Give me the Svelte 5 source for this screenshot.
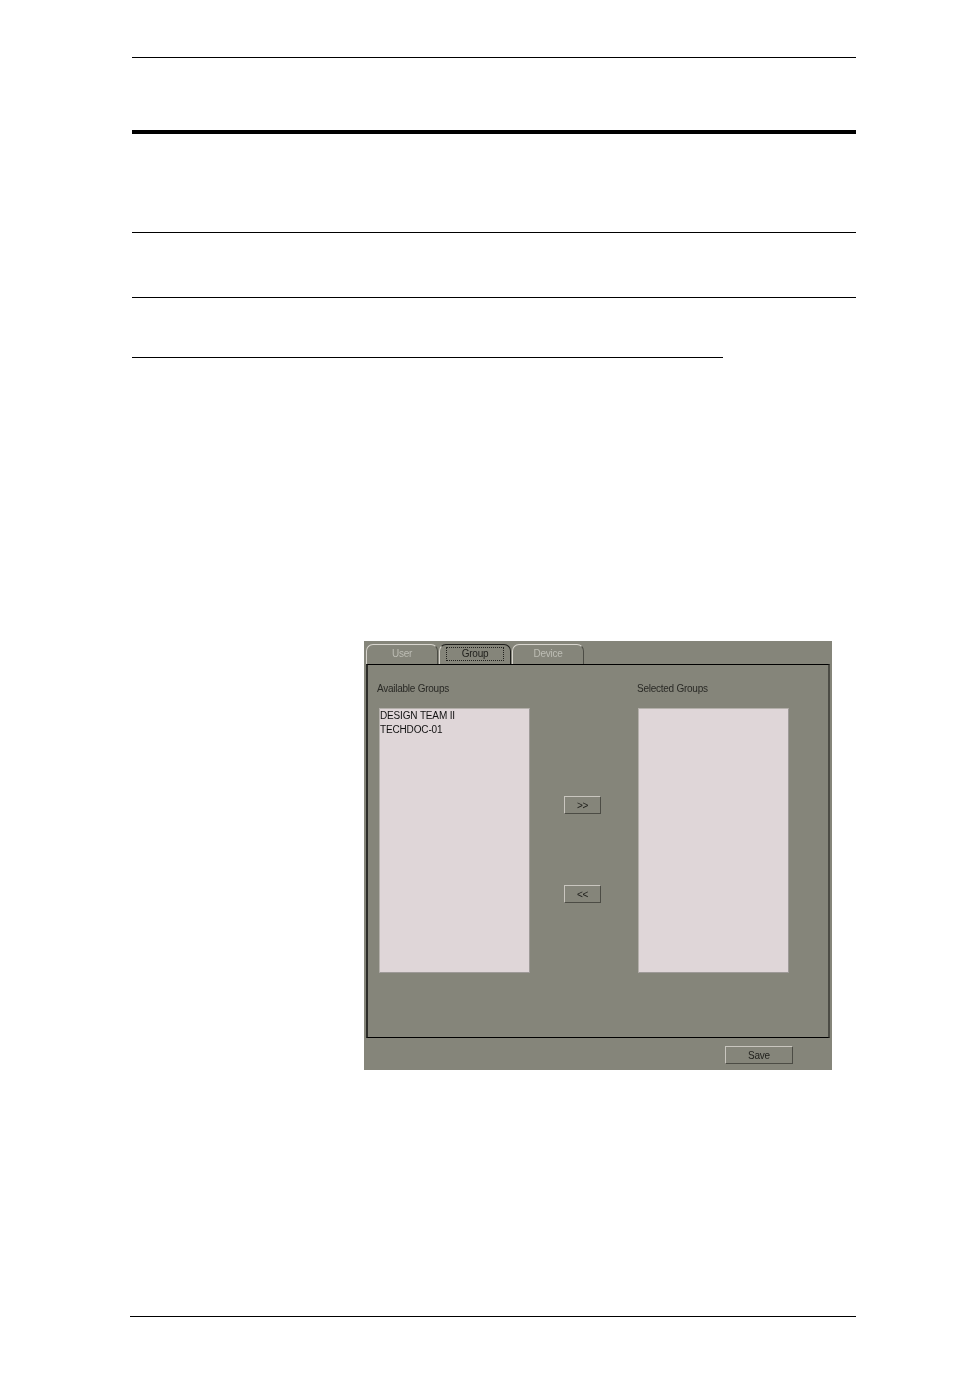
<script>
  const tabs = [
    { label: 'User', active: false },
    { label: 'Group', active: true },
    { label: 'Device', active: false }
  ];
  const available = ['DESIGN TEAM II', 'TECHDOC-01'];
</script>

<div class="page">
  <div class="rule"></div>
  <div class="rule thick"></div>
  <div class="rule r3"></div>
  <div class="rule r4"></div>
  <div class="rule r5"></div>

  <div class="window">
    <div class="tabs">
      {#each tabs as tab}
        <div class="tab" class:active={tab.active}>
          <span class="tab-label"><span class="soft">{tab.label}</span></span>
        </div>
      {/each}
    </div>

    <div class="panel">
      <div class="col">
        <div class="label soft">Available Groups</div>
        <div class="list">
          {#each available as item}
            <div class="soft">{item}</div>
          {/each}
        </div>
      </div>
      <div class="mid">
        <button class="btn arrow"><span class="soft">&gt;&gt;</span></button>
        <button class="btn arrow"><span class="soft">&lt;&lt;</span></button>
      </div>
      <div class="col">
        <div class="label soft">Selected Groups</div>
        <div class="list"></div>
      </div>
    </div>

    <div class="foot">
      <button class="btn save"><span class="soft">Save</span></button>
    </div>
  </div>

  <div class="rule bottom"></div>
</div>

<style>
  :global(body) {
    margin: 0;
    background: #fff;
  }

  .page {
    height: 1384px;
    padding: 57px 98px 0 132px;
    box-sizing: border-box;
    overflow: hidden;
  }

  .rule {
    height: 1px;
    background: #000;
  }

  .thick {
    height: 4px;
    margin-top: 72px;
  }

  .r3 {
    margin-top: 98px;
  }

  .r4 {
    margin-top: 64px;
  }

  .r5 {
    margin-top: 59px;
    width: 591px;
  }

  .bottom {
    margin: 246px 0 0 -2px;
  }

  .window {
    width: 468px;
    height: 429px;
    margin: 283px 0 0 232px;
    background: #85857a;
    font-family: "Liberation Sans", Arial, sans-serif;
    font-size: 10px;
    letter-spacing: -0.25px;
    color: #2a2a26;
    box-sizing: border-box;
    padding: 0 2px;
  }

  /* the reference is a scaled-down bitmap, so its text is a little soft */
  .soft {
    display: inline-block;
    filter: blur(0.3px);
  }

  .label.soft,
  .list .soft {
    display: block;
  }

  .tabs {
    display: flex;
    align-items: flex-end;
    height: 23px;
  }

  .tab {
    width: 72px;
    height: 20px;
    margin-right: 1px;
    box-sizing: border-box;
    border: 1px solid #d8d5ce;
    border-bottom: none;
    border-right-color: #4c4c45;
    border-radius: 7px 7px 0 0;
    display: flex;
    align-items: center;
    justify-content: center;
    color: #bdbdb4;
    padding-bottom: 2px;
  }

  .tab.active {
    border-color: #1d1d1a;
    border-left-color: #d8d5ce;
    color: #22221e;
  }

  .tab-label {
    padding: 0 15px;
    line-height: 12px;
  }

  .active .tab-label {
    border: 1px dotted #22221e;
  }

  .panel {
    height: 374px;
    box-sizing: border-box;
    border: 1px solid #000;
    border-left: 2px solid #2c2c28;
    border-right: 2px solid #4c4c45;
    display: grid;
    grid-template-columns: 163px 97px 1fr;
    padding: 17px 0 0 9px;
  }

  .col {
    display: flex;
    flex-direction: column;
  }

  .label {
    line-height: 14px;
    height: 26px;
  }

  .list {
    width: 151px;
    height: 265px;
    margin-left: 2px;
    box-sizing: border-box;
    background: #dfd6d8;
    border: 1px solid #9e9a98;
    border-top-color: #b4b0ab;
    border-left-color: #b4b0ab;
    color: #111;
    line-height: 14px;
    letter-spacing: -0.15px;
  }

  .col:last-child .list {
    margin-left: 1px;
  }

  .mid {
    display: flex;
    flex-direction: column;
    gap: 71px;
    padding: 114px 0 0 24px;
  }

  .btn {
    display: block;
    padding: 0;
    margin: 0;
    background: #85857a;
    border: 1px solid #c9c6bf;
    border-right-color: #4c4c45;
    border-bottom-color: #4c4c45;
    font: inherit;
    letter-spacing: inherit;
    color: #22221e;
    text-align: center;
  }

  .arrow {
    width: 37px;
    height: 18px;
  }

  .foot {
    display: flex;
    padding: 8px 0 0 359px;
  }

  .save {
    width: 68px;
    height: 18px;
  }
</style>
